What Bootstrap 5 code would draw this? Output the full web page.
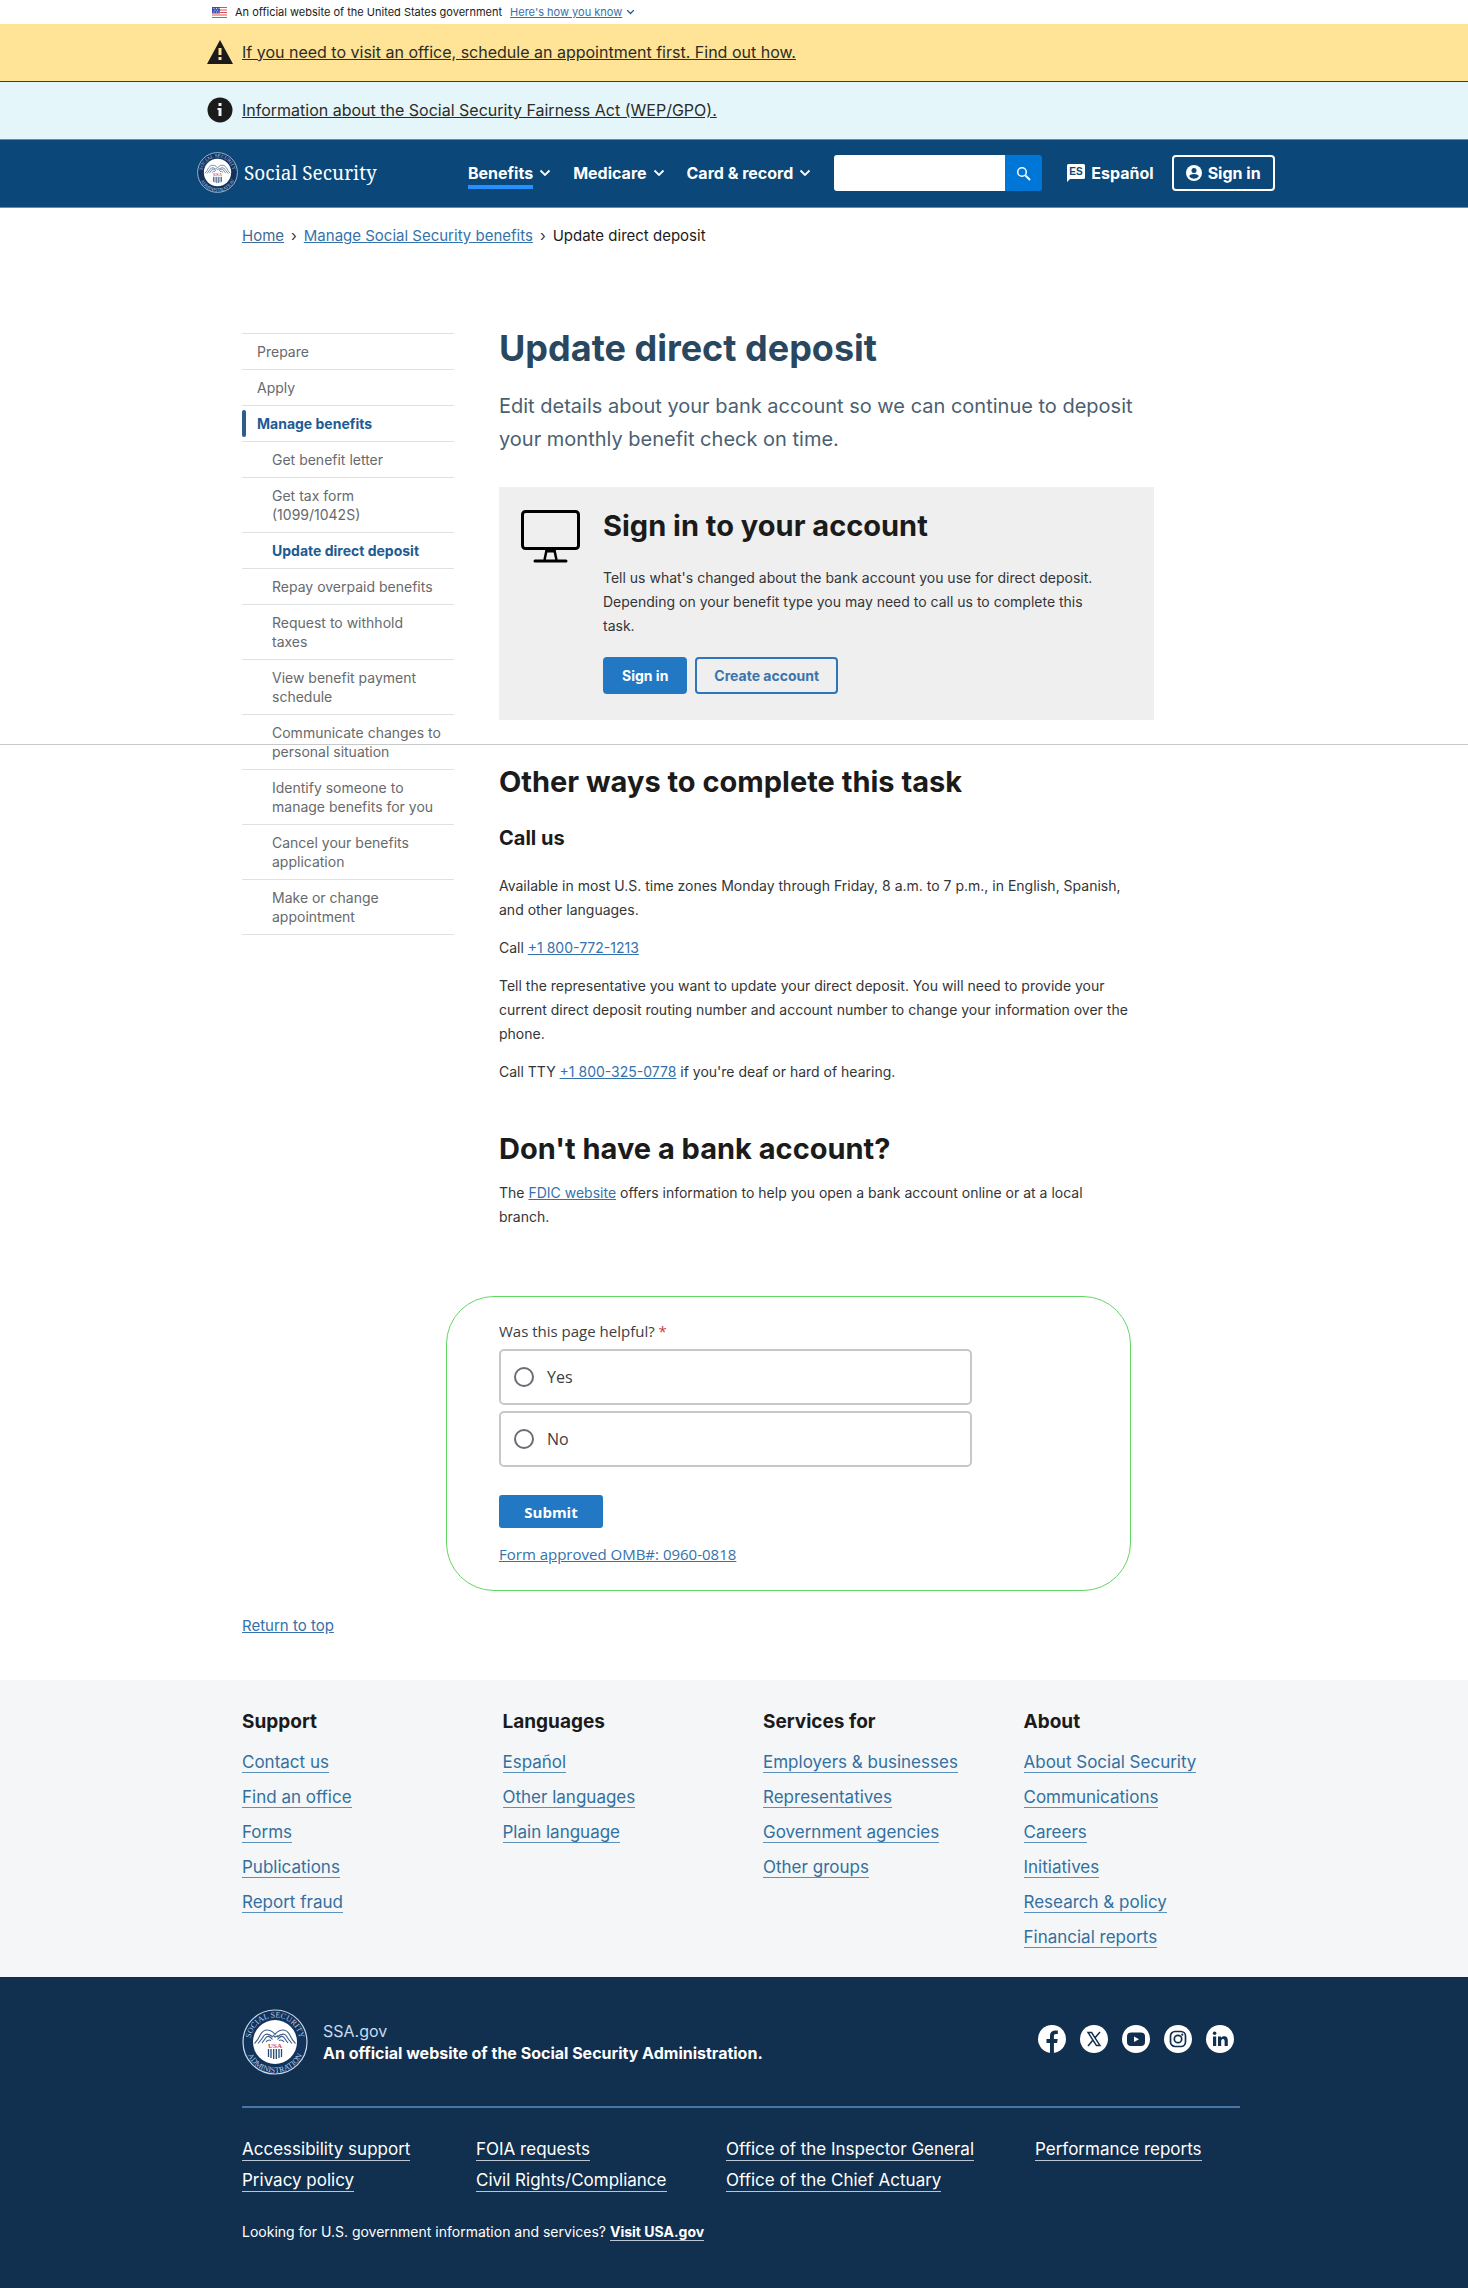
<!DOCTYPE html>
<html lang="en">
<head>
<meta charset="utf-8">
<meta name="viewport" content="width=device-width, initial-scale=1">
<title>Update direct deposit | SSA</title>
<link href="https://cdn.jsdelivr.net/npm/bootstrap@5.3.0/dist/css/bootstrap.min.css" rel="stylesheet">
<style>
body{font-family:Inter,"Liberation Sans",sans-serif;font-size:14px;line-height:24px;color:#333538;background:#fff}
a{color:#3572ab}
h1,h2,h3,p,ul{margin:0;padding:0}
.wrap{max-width:984px;margin:0 auto}
.wrap-gov{max-width:1044px;margin:0 auto;height:24px;font-size:11px;color:#1b1b1b}
.alert-strip{height:57px;font-size:16px}
.alert-strip .inner{max-width:1054px;margin:0 auto;gap:9px;padding-bottom:2px}
.alert-strip a{color:#2b2c28}
.strip-warn{background:#ffe396;height:58px;border-bottom:1px solid #1f4a44}
.strip-info{background:#e5f6fa}
.topnav{background:#0b4778;height:69px;padding:0;border-bottom:1px solid #6d8cab;border-top:1px solid #5f8fb5}
.topnav .inner{max-width:1088px;margin:0 auto;padding-bottom:2px}
.brand{font-family:"Noto Serif","Liberation Serif",serif;font-size:19px;color:#fff;text-decoration:none;width:278px;padding-left:7px;gap:6px;flex-shrink:0}
.menu{gap:22px}
.menu a{color:#fff;font-weight:700;font-size:16px;text-decoration:none;gap:6px;white-space:nowrap}
.menu .active span{box-shadow:0 4px #2491ff}
.search{width:208px;margin-left:23px}
.search input{height:36px;border:0;border-radius:3px 0 0 3px;padding:4px 8px}
.search button{background:#0076d6;border:0;width:37px;border-radius:0 3px 3px 0;padding:0}
.nav-es{color:#fff;font-weight:700;font-size:16px;text-decoration:none;gap:6px;margin-left:25px}
.nav-sign{color:#fff;font-weight:700;font-size:16px;border:2px solid #fff;border-radius:4px;width:103px;height:36px;padding:0;gap:6px;margin-left:18px}
.crumbs{padding-top:18px;line-height:20px;gap:7px;font-size:15px}
.crumbs li:first-child a{color:#3f6a93}
.crumbs li:last-child{color:#1b1b1b}
.page-row{margin-top:80px;gap:45px}
.side{flex:0 0 212px;padding-top:7px;line-height:19px}
.side ul{border-top:1px solid #dfe1e2}
.side li{border-bottom:1px solid #dfe1e2;padding:8px 6px 8px 15px;position:relative}
.side li.sub{padding-left:30px}
.side a{color:#676a6c;text-decoration:none}
.side .on a{color:#1d5b92;font-weight:700}
.side .open::before{content:"";position:absolute;left:0;top:4px;bottom:4px;width:4px;border-radius:2px;background:#2f5d8a}
.main{flex:0 1 655px}
.main h1{font-size:36px;line-height:44px;font-weight:700;color:#29475f}
.main h2{font-size:29px;line-height:36px;font-weight:700;color:#1b1b1b}
.main h3{font-size:20px;line-height:24px;font-weight:700;color:#1b1b1b;margin:26px 0 24px}
.main p{max-width:634px}
.main p + p{margin-top:14px}
.main .intro{max-width:none;font-size:20px;line-height:33px;margin-top:20px;color:#4a5f71}
.main .h-other{margin-top:44px}
.main .h-bank{margin:47px 0 14px}
.signbox{background:#efefef;margin-top:31px;padding:21px 48px 26px 21px;gap:22px}
.signbox p{margin:22px 0 19px}
.btn-ssa{height:37px;border-radius:4px;font-weight:700;font-size:14px;padding:0 17px;background:#2378c3;color:#fff;border:2px solid #2378c3;line-height:20px}
.btn-line{background:transparent;color:#3a74ae;border-color:#2e75ba}
.page-rule{position:absolute;left:0;right:0;top:744px;height:1px;background:#c9cacb}
.survey{font-family:"Open Sans","Noto Sans",sans-serif;border:1px solid #62d662;border-radius:48px;max-width:685px;margin:67px 0 0 204px;padding:24px 158px 26px 52px;line-height:20px;font-size:15px;color:#3b3d42}
.star{color:#d0393e}
.choice{border:2px solid #c6c9cc;border-radius:5px;height:56px;padding:0 13px;gap:13px;font-size:16px;margin-bottom:6px}
.choice input{appearance:none;width:20px;height:20px;border:2px solid #6a6d75;border-radius:50%;margin:0}
.btn-send{height:33px;width:104px;border-radius:3px;font-size:15px;margin:28px 0 16px;padding:0}
.to-top{margin-top:25px;line-height:20px;font-size:15px}
.foot-links{background:#f4f6f8;padding:30px 0 28px;margin-top:44px;font-size:17px}
.foot-links .inner{max-width:1100px;margin:0 auto;padding-left:58px}
.foot-links h2{font-size:19px;line-height:24px;font-weight:700;color:#1b1b1b;margin-bottom:16px}
.foot-links li{height:24px;margin-bottom:11px}
.foot-links a{color:#33709f;text-decoration:none;border-bottom:1px solid #5b90bd}
.foot-links li:last-child{margin-bottom:0}
.foot-dark{background:#112f4e;color:#fff;padding:32px 0 44px;border-bottom:1px solid #7f96ae}
.foot-dark .inner{max-width:1024px;margin:0 auto;padding:0 6px 0 20px}
.foot-dark a{color:#fff;text-decoration:none}
.foot-dark .ul{border-bottom:1px solid #b9c6d4}
.org{line-height:22px;gap:15px}
.org-site{color:#c5dcf2;font-size:16px}
.org-name{font-weight:700;font-size:16px}
.soc{gap:14px;padding-right:6px;padding-bottom:6px}
.soc a,.soc svg{display:block}
.fline{height:2px;background:#4a76a3;margin:31px 0 30px}
.fcols{font-size:17px}
.fcols div{display:flex;flex-direction:column;align-items:flex-start;gap:7px}
.fcols a{line-height:22px;margin-bottom:1px}
.fc1{flex:0 0 234px}
.fc2{flex:0 0 250px}
.fc3{flex:0 0 309px}
.usa{margin-top:27px}
</style>
<script src="https://cdn.jsdelivr.net/npm/bootstrap@5.3.0/dist/js/bootstrap.bundle.min.js"></script>
</head>
<body class="position-relative">
<svg width="0" height="0" class="position-absolute">
  <defs>
    <path id="arcTop" d="M 8.600 37 A 24.700 24.700 0 1 1 57.400 37"/>
    <path id="arcBot" d="M 3 30 A 30.200 30.200 0 1 0 63 30"/>
    <symbol id="seal" viewBox="0 0 66 66">
      <circle cx="33" cy="33" r="32" fill="#12335c" stroke="#c9d9ec" stroke-width="1.200"/>
      <circle cx="33" cy="33" r="22" fill="#fff"/>
      <g fill="#b5cbe6" font-family="Liberation Serif, serif" font-size="8">
        <text text-anchor="middle"><textPath href="#arcTop" startOffset="50%">SOCIAL SECURITY</textPath></text>
        <text text-anchor="middle"><textPath href="#arcBot" startOffset="50%">ADMINISTRATION</textPath></text>
      </g>
      <g fill="none" stroke="#3d5f8c" stroke-width="1.100">
        <path d="M12.500 34.500Q16 31 18.500 25.500 22 19.500 28 21.500 31.500 23 33 25.500 34.500 23 38 21.500 44 19.500 47.500 25.500 50 31 53.500 34.500"/>
        <path d="M16 34.500Q20 30 22 26.500 25 23 31 28M20 34Q23 30 24.500 28 27 26 30.500 30.500M24 33Q26 30 29 31.500M50 34.500Q46 30 44 26.500 41 23 35 28M46 34Q43 30 41.500 28 39 26 35.500 30.500M42 33Q40 30 37 31.500M31 26l2 2 3-1.500"/>
      </g>
      <text x="33" y="39" text-anchor="middle" font-family="Liberation Serif, serif" font-weight="700" font-size="7" fill="#d0404f">USA</text>
      <path d="M26.500 40v8M29 40v9M31.700 40v10M34.300 40v10M37 40v9M39.500 40v8" stroke="#2b4a77" stroke-width="1.300"/>
    </symbol>
    <symbol id="chev" viewBox="0 0 12 8"><path d="M1.500 1.500 6 6l4.500-4.500" fill="none" stroke="currentColor" stroke-width="1.800"/></symbol>
  </defs>
</svg>

<div class="wrap-gov d-flex align-items-center">
  <svg width="15" height="11" viewBox="0 0 15 11" aria-hidden="true"><path fill="#fff" d="M0 0h15v11H0z"/><path d="M0 .5h15M0 3h15M0 5.500h15M0 8h15M0 10.500h15" stroke="#dc5050"/><path fill="#3b4fb0" d="M0 0h8v6.500H0z"/><path d="M1.500 1.500h1M4 1.500h1M6.500 1.500h1M2.500 3.200h1M5 3.200h1M1.500 5h1M4 5h1M6.500 5h1" stroke="#fff" stroke-width=".8"/></svg>
  <span class="ms-2">An official website of the United States government</span>
  <a href="#" class="ms-2">Here's how you know</a>
  <svg class="ms-1" width="9" height="6" color="#1d5b92"><use href="#chev"/></svg>
</div>

<div class="alert-strip strip-warn"><div class="inner d-flex align-items-center h-100">
  <svg width="26" height="24" viewBox="0 0 26 24"><path d="M13 0 26 24H0z" fill="#1b1b1b"/><path d="M11.500 8h3v7h-3zM11.500 17h3v3h-3z" fill="#ffe396"/></svg>
  <a href="#">If you need to visit an office, schedule an appointment first. Find out how.</a>
</div></div>
<div class="alert-strip strip-info"><div class="inner d-flex align-items-center h-100">
  <svg width="26" height="26" viewBox="0 0 26 26"><circle cx="13" cy="13" r="12.500" fill="#1b1b1b"/><path d="M11.500 6h3v3h-3zM10.500 11h4v8h-3v-6h-1z" fill="#e5f6fa"/></svg>
  <a href="#">Information about the Social Security Fairness Act (WEP/GPO).</a>
</div></div>

<nav class="navbar topnav"><div class="inner d-flex align-items-center w-100 h-100">
  <a class="brand d-flex align-items-center" href="#"><svg width="41" height="41"><use href="#seal"/></svg>Social Security</a>
  <div class="menu d-flex">
    <a class="d-flex align-items-center active" href="#"><span>Benefits</span><svg width="12" height="8"><use href="#chev"/></svg></a>
    <a class="d-flex align-items-center" href="#"><span>Medicare</span><svg width="12" height="8"><use href="#chev"/></svg></a>
    <a class="d-flex align-items-center" href="#"><span>Card &amp; record</span><svg width="12" height="8"><use href="#chev"/></svg></a>
  </div>
  <form class="search d-flex">
    <input class="form-control" type="search" aria-label="Search">
    <button type="button" class="flex-shrink-0" aria-label="Search"><svg width="16" height="16" viewBox="0 0 16 16" fill="none" stroke="#fff"><circle cx="6" cy="6" r="4.300" stroke-width="1.500"/><path d="m9.500 9.500 4.500 4.500" stroke-width="2"/></svg></button>
  </form>
  <a class="nav-es d-flex align-items-center" href="#"><svg width="18" height="18" viewBox="0 0 18 18"><path d="M1.500 0h15Q18 0 18 1.500v12q0 1.500-1.500 1.500H3L0 18V1.500Q0 0 1.500 0z" fill="#fff"/><text x="9" y="11" text-anchor="middle" font-family="Liberation Sans, sans-serif" font-weight="700" font-size="10" fill="#0b4778">ES</text></svg>Español</a>
  <button type="button" class="btn nav-sign d-flex align-items-center justify-content-center"><svg width="16" height="16" viewBox="0 0 16 16"><circle cx="8" cy="8" r="8" fill="#fff"/><circle cx="8" cy="5.500" r="2.500" fill="#0b4778"/><path d="M3 11q1.500-2 5-2t5 2q-1.700 2.800-5 2.800T3 11z" fill="#0b4778"/></svg>Sign in</button>
</div></nav>

<div class="wrap">
  <ol class="crumbs list-unstyled d-flex mb-0">
    <li><a href="#">Home</a></li>
    <li aria-hidden="true">›</li>
    <li><a href="#">Manage Social Security benefits</a></li>
    <li aria-hidden="true">›</li>
    <li>Update direct deposit</li>
  </ol>

  <div class="page-row d-flex align-items-start">
    <nav class="side" aria-label="Section">
      <ul class="list-unstyled">
        <li><a href="#">Prepare</a></li>
        <li><a href="#">Apply</a></li>
        <li class="on open"><a href="#">Manage benefits</a></li>
        <li class="sub"><a href="#">Get benefit letter</a></li>
        <li class="sub"><a href="#">Get tax form<br>(1099/1042S)</a></li>
        <li class="sub on"><a href="#">Update direct deposit</a></li>
        <li class="sub"><a href="#">Repay overpaid benefits</a></li>
        <li class="sub"><a href="#">Request to withhold<br>taxes</a></li>
        <li class="sub"><a href="#">View benefit payment<br>schedule</a></li>
        <li class="sub"><a href="#">Communicate changes to personal situation</a></li>
        <li class="sub"><a href="#">Identify someone to<br>manage benefits for you</a></li>
        <li class="sub"><a href="#">Cancel your benefits<br>application</a></li>
        <li class="sub"><a href="#">Make or change<br>appointment</a></li>
      </ul>
    </nav>
    <main class="main">
      <h1>Update direct deposit</h1>
      <p class="intro">Edit details about your bank account so we can continue to deposit your monthly benefit check on time.</p>
      <section class="signbox d-flex align-items-start">
        <svg class="flex-shrink-0" width="61" height="56" viewBox="0 -2 61 56" fill="none" stroke="#000"><rect x="2.500" y="1.500" width="56" height="37" rx="3" stroke-width="3"/><path d="M27 38 24.500 50M34 38 36.500 50" stroke-width="2.500"/><path d="M26 39h9v3h-9z" fill="#000"/><path d="M15 51h31" stroke-width="3" stroke-linecap="round"/></svg>
        <div>
          <h2>Sign in to your account</h2>
          <p>Tell us what's changed about the bank account you use for direct deposit. Depending on your benefit type you may need to call us to complete this task.</p>
          <div class="d-flex gap-2">
            <button type="button" class="btn btn-ssa">Sign in</button>
            <button type="button" class="btn btn-ssa btn-line">Create account</button>
          </div>
        </div>
      </section>
      <h2 class="h-other">Other ways to complete this task</h2>
      <h3>Call us</h3>
      <p>Available in most U.S. time zones Monday through Friday, 8 a.m. to 7 p.m., in English, Spanish, and other languages.</p>
      <p>Call <a href="#">+1 800-772-1213</a></p>
      <p>Tell the representative you want to update your direct deposit. You will need to provide your current direct deposit routing number and account number to change your information over the phone.</p>
      <p>Call TTY <a href="#">+1 800-325-0778</a> if you're deaf or hard of hearing.</p>
      <h2 class="h-bank">Don't have a bank account?</h2>
      <p>The <a href="#">FDIC website</a> offers information to help you open a bank account online or at a local branch.</p>
    </main>
  </div>

  <form class="survey">
    <div id="ask" class="mb-2">Was this page helpful? <span class="star">*</span></div>
    <div role="radiogroup" aria-labelledby="ask">
      <label class="choice d-flex align-items-center"><input type="radio" name="helpful">Yes</label>
      <label class="choice d-flex align-items-center"><input type="radio" name="helpful">No</label>
    </div>
    <button type="button" class="btn btn-ssa btn-send d-block">Submit</button>
    <a href="#">Form approved OMB#: 0960-0818</a>
  </form>
  <div class="to-top"><a href="#">Return to top</a></div>
</div>

<footer>
  <div class="foot-links"><div class="inner"><div class="row gx-0">
    <div class="col-3"><h2>Support</h2><ul class="list-unstyled"><li><a href="#">Contact us</a></li><li><a href="#">Find an office</a></li><li><a href="#">Forms</a></li><li><a href="#">Publications</a></li><li><a href="#">Report fraud</a></li></ul></div>
    <div class="col-3"><h2>Languages</h2><ul class="list-unstyled"><li><a href="#">Español</a></li><li><a href="#">Other languages</a></li><li><a href="#">Plain language</a></li></ul></div>
    <div class="col-3"><h2>Services for</h2><ul class="list-unstyled"><li><a href="#">Employers &amp; businesses</a></li><li><a href="#">Representatives</a></li><li><a href="#">Government agencies</a></li><li><a href="#">Other groups</a></li></ul></div>
    <div class="col-3"><h2>About</h2><ul class="list-unstyled"><li><a href="#">About Social Security</a></li><li><a href="#">Communications</a></li><li><a href="#">Careers</a></li><li><a href="#">Initiatives</a></li><li><a href="#">Research &amp; policy</a></li><li><a href="#">Financial reports</a></li></ul></div>
  </div></div></div>
  <div class="foot-dark"><div class="inner">
    <div class="d-flex justify-content-between align-items-center">
      <div class="org d-flex align-items-center"><svg width="66" height="66"><use href="#seal"/></svg><div><div class="org-site">SSA.gov</div><div class="org-name">An official website of the Social Security Administration.</div></div></div>
      <div class="soc d-flex">
        <a href="#" aria-label="Facebook"><svg width="28" height="28" viewBox="0 0 28 28"><circle cx="14" cy="14" r="14" fill="#fff"/><path d="M12 28V18H8.500v-4H12v-3.200C12 7.500 14 5.500 17.200 5.500h2.600V9H18c-1.600 0-2.100.8-2.100 2v3h3.800l-.6 4h-3.200v10z" fill="#112f4e"/></svg></a>
        <a href="#" aria-label="X"><svg width="28" height="28" viewBox="0 0 28 28"><circle cx="14" cy="14" r="14" fill="#fff"/><path d="M8 7.500h3.600l8.400 13h-3.600z" fill="none" stroke="#112f4e" stroke-width="1.400"/><path d="m20 7-5.200 6M13 15l-5 6" stroke="#112f4e" stroke-width="1.500"/></svg></a>
        <a href="#" aria-label="YouTube"><svg width="28" height="28" viewBox="0 0 28 28"><circle cx="14" cy="14" r="14" fill="#fff"/><rect x="5" y="7.500" width="18" height="13.500" rx="4" fill="#112f4e"/><path d="m12 11.500 5 2.700-5 2.700z" fill="#fff"/></svg></a>
        <a href="#" aria-label="Instagram"><svg width="28" height="28" viewBox="0 0 28 28"><circle cx="14" cy="14" r="14" fill="#fff"/><g fill="none" stroke="#112f4e" stroke-width="1.700"><rect x="6.500" y="6.500" width="15" height="15" rx="4.500"/><circle cx="14" cy="14" r="3.700"/></g><circle cx="18.300" cy="9.700" r="1.100" fill="#112f4e"/></svg></a>
        <a href="#" aria-label="LinkedIn"><svg width="28" height="28" viewBox="0 0 28 28"><circle cx="14" cy="14" r="14" fill="#fff"/><path d="M7 11.500h3.200V21H7zM12 11.500h3v1.300c.6-1 1.700-1.600 3-1.600 3 0 3.800 1.800 3.800 4.600V21h-3.200v-4.700c0-1.400-.3-2.400-1.600-2.400s-1.800 1-1.800 2.400V21H12z" fill="#112f4e"/><circle cx="8.600" cy="8.200" r="1.800" fill="#112f4e"/></svg></a>
      </div>
    </div>
    <div class="fline"></div>
    <div class="fcols d-flex">
      <div class="fc1"><a class="ul" href="#">Accessibility support</a><a class="ul" href="#">Privacy policy</a></div>
      <div class="fc2"><a class="ul" href="#">FOIA requests</a><a class="ul" href="#">Civil Rights/Compliance</a></div>
      <div class="fc3"><a class="ul" href="#">Office of the Inspector General</a><a class="ul" href="#">Office of the Chief Actuary</a></div>
      <div><a class="ul" href="#">Performance reports</a></div>
    </div>
    <p class="usa">Looking for U.S. government information and services? <a class="ul fw-bold" href="#">Visit USA.gov</a></p>
  </div></div>
</footer>
<div class="page-rule"></div>
</body>
</html>
